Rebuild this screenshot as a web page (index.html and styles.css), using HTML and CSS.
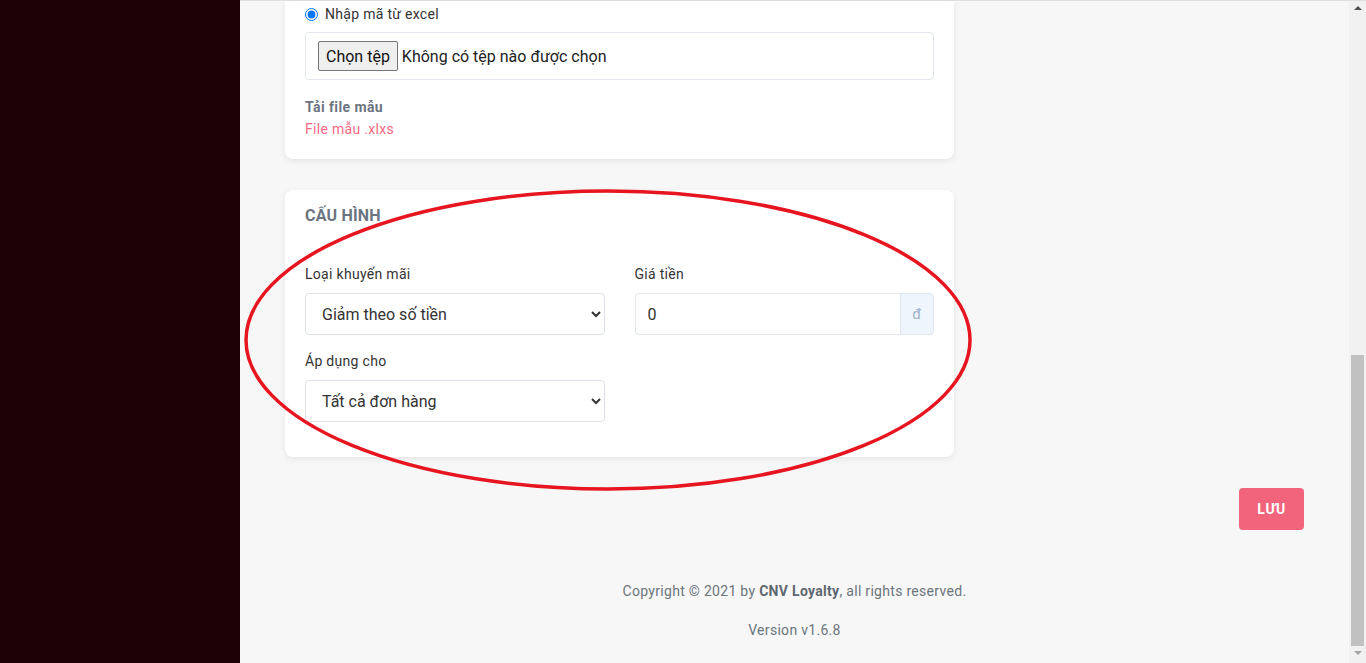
FILE: index.html
```html
<!DOCTYPE html>
<html lang="vi">
<head>
<meta charset="utf-8">
<title>CNV Loyalty</title>
<link rel="stylesheet" href="styles.css">
</head>
<body>
<div class="page">
  <aside class="sidebar"></aside>
  <main class="main">
    <div class="content">
      <section class="card card-import">
        <label class="radio-row"><input type="radio" name="src" checked> <span>Nhập mã từ excel</span></label>
        <div class="file-box">
          <span class="file-btn">Chọn tệp</span>
          <span class="file-text">Không có tệp nào được chọn</span>
        </div>
        <div class="sample-title">Tải file mẫu</div>
        <a class="sample-link" href="#">File mẫu .xlxs</a>
      </section>

      <section class="card card-config">
        <h3 class="card-title">CẤU HÌNH</h3>
        <div class="form-grid">
          <div class="form-group">
            <label class="form-label">Loại khuyến mãi</label>
            <select class="form-select">
              <option>Giảm theo số tiền</option>
            </select>
          </div>
          <div class="form-group">
            <label class="form-label">Giá tiền</label>
            <div class="input-group">
              <input class="form-input" type="text" value="0">
              <span class="input-append">đ</span>
            </div>
          </div>
          <div class="form-group">
            <label class="form-label">Áp dụng cho</label>
            <select class="form-select">
              <option>Tất cả đơn hàng</option>
            </select>
          </div>
        </div>
      </section>

      <div class="actions">
        <button class="btn-save">LƯU</button>
      </div>
    </div>
    <footer class="footer">
      <p class="copy">Copyright © 2021 by <strong>CNV Loyalty</strong>, all rights reserved.</p>
      <p class="version">Version v1.6.8</p>
    </footer>
  </main>
  <div class="scrollbar">
    <span class="arrow arrow-up"></span>
    <span class="thumb"></span>
    <span class="arrow arrow-down"></span>
  </div>
  <svg class="annotation" width="1366" height="663" viewBox="0 0 1366 663">
    <ellipse cx="608" cy="340" rx="362" ry="149" fill="none" stroke="#e6151f" stroke-width="3.5"/>
  </svg>
</div>
</body>
</html>
```

FILE: styles.css
```css
* { box-sizing: border-box; }
html, body { margin: 0; padding: 0; height: 100%; overflow: hidden; }
body {
  font-family: Roboto, "Noto Sans", "Liberation Sans", sans-serif;
  font-size: 14px;
  letter-spacing: 0.3px;
  color: #333;
  background: #f7f7f7;
}
.page {
  position: relative;
  display: flex;
  width: 1366px;
  height: 663px;
}
.sidebar {
  width: 240px;
  flex: none;
  background: #1e0106;
}
.main {
  flex: 1;
  display: flex;
  flex-direction: column;
  background: #f7f7f7;
  border-top: 1px solid #e0e0e4;
}
.content {
  padding: 0 45px;
}
.card {
  width: 669px;
  background: #fff;
  border-radius: 8px;
  box-shadow: 0 2px 6px rgba(0,0,0,0.08);
  padding: 0 20px 20px;
}
.card-import {
  border-top-left-radius: 0;
  border-top-right-radius: 0;
  padding: 3px 20px 19px;
  margin-bottom: 31px;
}
.radio-row {
  display: flex;
  align-items: center;
  height: 20px;
  line-height: 20px;
  color: #333;
}
.radio-row input {
  margin: 0 7px 0 0;
  width: 13px;
  height: 13px;
}
.file-box {
  margin-top: 8px;
  height: 48px;
  border: 1px solid #e2e6ee;
  border-radius: 4px;
  display: flex;
  align-items: center;
  padding-left: 12px;
  font-size: 16px;
  letter-spacing: 0;
  color: #222;
}
.file-btn {
  display: inline-flex;
  align-items: center;
  height: 30px;
  padding: 0 7px;
  background: #efefef;
  border: 1px solid #767676;
  border-radius: 2px;
  margin-right: 4px;
  color: #111;
}
.sample-title {
  margin-top: 17px;
  font-weight: 700;
  line-height: 21px;
  letter-spacing: 0.4px;
  color: #6b7480;
}
.sample-link {
  display: block;
  margin-top: 1px;
  line-height: 21px;
  color: #f26a86;
  text-decoration: none;
}
.card-config {
  padding: 16px 20px 35px;
}
.card-title {
  margin: 0 0 38px;
  font-size: 16px;
  line-height: 20px;
  font-weight: 700;
  letter-spacing: 0.2px;
  color: #6b7480;
}
.form-grid {
  display: grid;
  grid-template-columns: 1fr 1fr;
  column-gap: 30px;
  row-gap: 16px;
}
.form-label {
  display: block;
  line-height: 21px;
  margin-bottom: 8px;
  color: #333;
}
.form-select {
  width: 100%;
  height: 42px;
  border: 1px solid #dde2ea;
  border-radius: 4px;
  background: #fff;
  font-family: Roboto, "Noto Sans", sans-serif;
  font-size: 16px;
  color: #333;
  padding: 0 12px 0 12px;
}
.input-group {
  display: flex;
  height: 42px;
}
.form-input {
  flex: 1;
  min-width: 0;
  height: 42px;
  border: 1px solid #e2e6ee;
  border-right: none;
  border-radius: 4px 0 0 4px;
  font-family: Roboto, "Noto Sans", sans-serif;
  font-size: 16px;
  color: #333;
  padding: 0 12px;
}
.input-append {
  width: 34px;
  display: flex;
  align-items: center;
  justify-content: center;
  background: #eef5fd;
  border: 1px solid #dfe6ee;
  border-radius: 0 4px 4px 0;
  color: #9fb3ca;
  font-size: 15px;
}
.actions {
  display: flex;
  justify-content: flex-end;
  margin-top: 31px;
}
.btn-save {
  width: 65px;
  height: 42px;
  border: none;
  border-radius: 4px;
  background: #f2647c;
  color: #fff;
  font-family: Roboto, "Noto Sans", sans-serif;
  font-size: 14px;
  font-weight: 700;
  letter-spacing: 0.5px;
}
.footer {
  text-align: center;
  color: #6c757d;
  margin-top: 51px;
}
.footer p { margin: 0; line-height: 21px; }
.footer strong { font-weight: 700; color: #5f6770; }
.footer .version { margin-top: 18px; }
.scrollbar {
  width: 17px;
  flex: none;
  background: #f1f1f1;
  display: flex;
  flex-direction: column;
  align-items: center;
  border-top: 1px solid #e0e0e4;
}
.arrow {
  width: 0; height: 0;
  border-left: 4px solid transparent;
  border-right: 4px solid transparent;
}
.arrow-up {
  margin-top: 5px;
  border-bottom: 4px solid #505050;
}
.thumb {
  width: 13px;
  height: 291px;
  background: #c1c1c1;
  margin-top: 345px;
}
.arrow-down {
  margin-top: 5px;
  border-top: 4px solid #a3a3a3;
}
.annotation {
  position: absolute;
  left: 0;
  top: 0;
  pointer-events: none;
}
```
